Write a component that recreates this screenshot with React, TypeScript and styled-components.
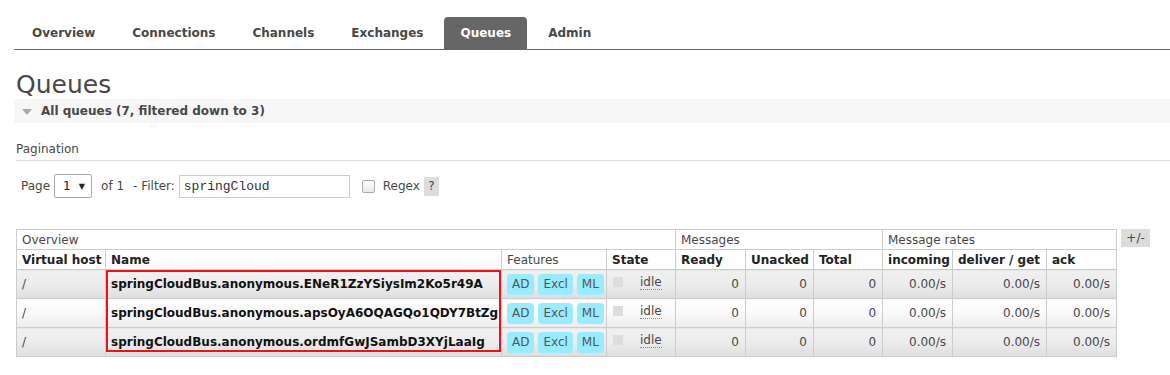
import React from "react";
import styled, { createGlobalStyle } from "styled-components";

const Global = createGlobalStyle`
  html, body { margin: 0; padding: 0; background: #fff; }
  body { font-family: "DejaVu Sans", Verdana, sans-serif; font-size: 12px; color: #484848; }
`;

const Page = styled.div`
  padding: 17px 0 0 16px;
`;

const Tabs = styled.ul`
  display: flex;
  list-style: none;
  margin: 0 0 0 -2px;
  padding: 0 0 0 2px;
  border-bottom: 1px solid #666;
  gap: 5px;
`;

const Tab = styled.li<{ $active?: boolean }>`
  height: 32px;
  padding: 0 16px;
  display: flex;
  align-items: center;
  font-weight: bold;
  font-size: 12px;
  border-radius: 4px 4px 0 0;
  background: ${(p) => (p.$active ? "#666" : "transparent")};
  color: ${(p) => (p.$active ? "#fff" : "#484848")};
`;

const Title = styled.h1`
  margin: 20px 0 0 0;
  font-size: 25px;
  font-weight: normal;
  line-height: 29px;
  color: #484848;
`;

const SectionBar = styled.div`
  margin-left: -2px;
  height: 24px;
  background: #f7f7f7;
  display: flex;
  align-items: center;
  padding-left: 8px;
  gap: 9px;
  font-weight: bold;
`;

const Triangle = styled.span`
  width: 0;
  height: 0;
  border-left: 5px solid transparent;
  border-right: 5px solid transparent;
  border-top: 6px solid #aaa;
  margin-top: 1px;
`;

const SubHead = styled.h3`
  margin: 18px 0 0 0;
  padding-bottom: 3px;
  font-size: 12px;
  font-weight: normal;
  line-height: 16px;
  color: #484848;
  border-bottom: 1px solid #ddd;
`;

const FilterRow = styled.div`
  display: flex;
  align-items: center;
  margin-top: 13px;
  padding-left: 5px;
  height: 24px;
`;

const Label = styled.span<{ $ml?: number }>`
  margin-left: ${(p) => p.$ml ?? 0}px;
`;

const SelectBox = styled.div`
  margin-left: 4px;
  height: 22px;
  border: 1px solid #aaa;
  border-radius: 2px;
  display: flex;
  align-items: center;
  padding-left: 8px;
  box-sizing: content-box;
  width: 28px;
  gap: 8px;
  font-size: 12px;
  color: #222;
`;

const Arrow = styled.span`
  font-size: 8px;
  color: #222;
`;

const FilterInput = styled.div`
  margin-left: 4px;
  width: 165px;
  height: 21px;
  border: 1px solid #ccc;
  padding-left: 4px;
  display: flex;
  align-items: center;
  font-family: "Liberation Mono", "Courier New", monospace;
  font-size: 13px;
  color: #333;
`;

const Check = styled.span`
  margin-left: 12px;
  width: 11px;
  height: 11px;
  border: 1px solid #aaa;
  border-radius: 2px;
  background: linear-gradient(#fff, #e8e8e8);
`;

const Help = styled.span`
  margin-left: 4px;
  width: 15px;
  height: 19px;
  background: #ddd;
  display: flex;
  align-items: center;
  justify-content: center;
  color: #484848;
`;

const TableWrap = styled.div`
  display: flex;
  align-items: flex-start;
  gap: 4px;
  margin-top: 31px;
`;

const Table = styled.table`
  border-collapse: collapse;
  table-layout: fixed;
  width: 1101px;
  font-size: 12px;
`;

const GroupTh = styled.th`
  border: 1px solid #ccc;
  height: 19px;
  padding: 0 5px;
  text-align: left;
  font-weight: normal;
  color: #484848;
  background: #fff;
`;

const ColTh = styled.th<{ $plain?: boolean }>`
  border: 1px solid #ccc;
  height: 19px;
  padding: 0 5px;
  text-align: left;
  font-weight: ${(p) => (p.$plain ? "normal" : "bold")};
  color: ${(p) => (p.$plain ? "#484848" : "#222")};
  background: #fff;
  white-space: nowrap;
  overflow: hidden;
`;

const Row = styled.tr<{ $alt: boolean }>`
  td {
    background: ${(p) =>
      p.$alt
        ? "linear-gradient(#f0f0f0, #ececec 50%, #dedede)"
        : "linear-gradient(#fff, #fafafa 50%, #ececec)"};
  }
`;

const Td = styled.td<{ $right?: boolean }>`
  border: 1px solid #ccc;
  height: 28px;
  padding: 0 6px 0 5px;
  vertical-align: middle;
  text-align: ${(p) => (p.$right ? "right" : "left")};
  white-space: nowrap;
  color: #484848;
`;

const NameTd = styled(Td)<{ $first?: boolean; $last?: boolean }>`
  position: relative;
  font-weight: bold;
  color: #111;
  &::after {
    content: "";
    position: absolute;
    left: 0;
    right: 0;
    top: ${(p) => (p.$first ? "0" : "-1px")};
    bottom: ${(p) => (p.$last ? "4px" : "-1px")};
    border-left: 2px solid #e8141b;
    border-right: 2px solid #e8141b;
    border-top: ${(p) => (p.$first ? "2px solid #e8141b" : "none")};
    border-bottom: ${(p) => (p.$last ? "2px solid #e8141b" : "none")};
    pointer-events: none;
  }
`;

const Badges = styled.div`
  display: flex;
  gap: 4px;
`;

const Badge = styled.span`
  display: inline-flex;
  align-items: center;
  height: 21px;
  padding: 0 5px;
  border-radius: 4px;
  background: #99ebff;
  color: #555;
`;

const StateWrap = styled.div`
  display: flex;
  align-items: center;
`;

const StateDot = styled.span`
  width: 10px;
  height: 10px;
  background: #ddd;
  margin: -5px 17px 0 1px;
`;

const Idle = styled.abbr`
  text-decoration: none;
  border-bottom: 1px dotted #888;
  line-height: 14px;
  margin-top: -4px;
`;

const Toggle = styled.span`
  width: 29px;
  height: 18px;
  background: #ddd;
  display: flex;
  align-items: center;
  justify-content: center;
  color: #484848;
`;

const queues = [
  "springCloudBus.anonymous.ENeR1ZzYSiysIm2Ko5r49A",
  "springCloudBus.anonymous.apsOyA6OQAGQo1QDY7BtZg",
  "springCloudBus.anonymous.ordmfGwJSambD3XYjLaaIg",
];

const widths = [89, 396, 105, 69, 70, 68, 69, 70, 94, 70];

export default function App() {
  return (
    <Page>
      <Global />
      <Tabs>
        {["Overview", "Connections", "Channels", "Exchanges", "Queues", "Admin"].map((t) => (
          <Tab key={t} $active={t === "Queues"}>
            {t}
          </Tab>
        ))}
      </Tabs>
      <Title>Queues</Title>
      <SectionBar>
        <Triangle />
        All queues (7, filtered down to 3)
      </SectionBar>
      <SubHead>Pagination</SubHead>
      <FilterRow>
        <Label>Page</Label>
        <SelectBox>
          1 <Arrow>▼</Arrow>
        </SelectBox>
        <Label $ml={9}>of 1</Label>
        <Label $ml={9}>- Filter:</Label>
        <FilterInput>springCloud</FilterInput>
        <Check />
        <Label $ml={8}>Regex</Label>
        <Help>?</Help>
      </FilterRow>
      <TableWrap>
        <Table>
          <colgroup>
            {widths.map((w, i) => (
              <col key={i} style={{ width: w }} />
            ))}
          </colgroup>
          <thead>
            <tr>
              <GroupTh colSpan={4}>Overview</GroupTh>
              <GroupTh colSpan={3}>Messages</GroupTh>
              <GroupTh colSpan={3}>Message rates</GroupTh>
            </tr>
            <tr>
              <ColTh>Virtual host</ColTh>
              <ColTh>Name</ColTh>
              <ColTh $plain>Features</ColTh>
              <ColTh>State</ColTh>
              <ColTh>Ready</ColTh>
              <ColTh>Unacked</ColTh>
              <ColTh>Total</ColTh>
              <ColTh>incoming</ColTh>
              <ColTh>deliver / get</ColTh>
              <ColTh>ack</ColTh>
            </tr>
          </thead>
          <tbody>
            {queues.map((q, i) => (
              <Row key={q} $alt={i % 2 === 0}>
                <Td>/</Td>
                <NameTd $first={i === 0} $last={i === queues.length - 1}>
                  {q}
                </NameTd>
                <Td>
                  <Badges>
                    <Badge>AD</Badge>
                    <Badge>Excl</Badge>
                    <Badge>ML</Badge>
                  </Badges>
                </Td>
                <Td>
                  <StateWrap>
                    <StateDot />
                    <Idle>idle</Idle>
                  </StateWrap>
                </Td>
                <Td $right>0</Td>
                <Td $right>0</Td>
                <Td $right>0</Td>
                <Td $right>0.00/s</Td>
                <Td $right>0.00/s</Td>
                <Td $right>0.00/s</Td>
              </Row>
            ))}
          </tbody>
        </Table>
        <Toggle>+/-</Toggle>
      </TableWrap>
    </Page>
  );
}
